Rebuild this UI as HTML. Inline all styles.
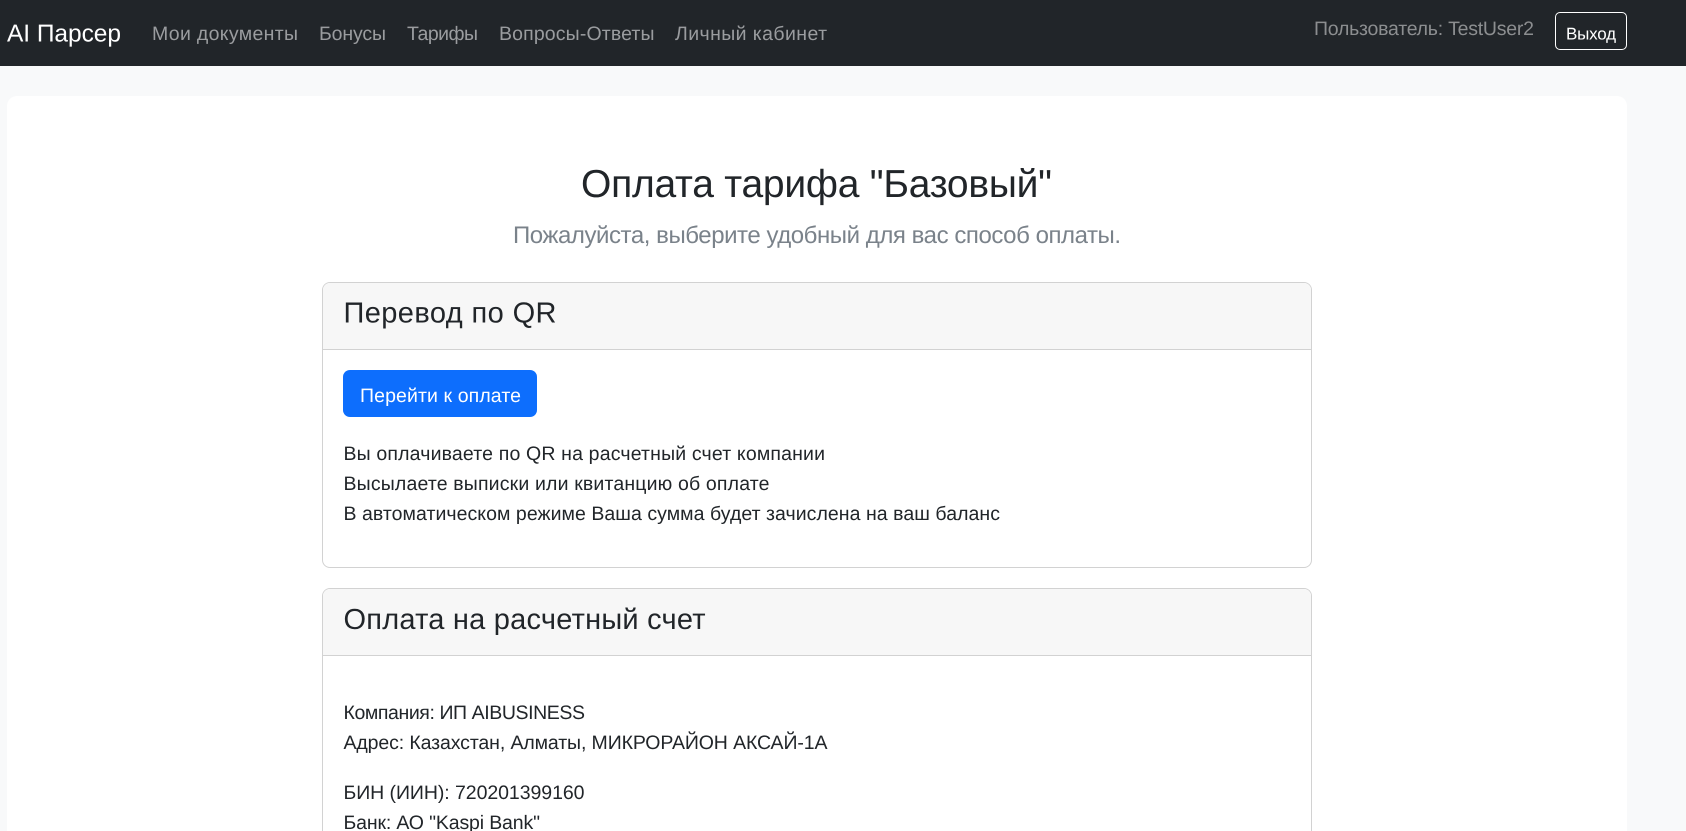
<!DOCTYPE html>
<html lang="ru">
<head>
<meta charset="utf-8">
<title>AI Парсер</title>
<style>
html,body{margin:0;padding:0;background:#f8f9fa;font-family:"Liberation Sans",sans-serif}
.page{position:relative;width:1686px;height:831px;overflow:hidden;background:#f8f9fa}
.nav{position:absolute;left:0;top:0;width:1686px;height:66px;background:#212529}
.panel{position:absolute;left:7px;top:96px;width:1620px;height:735px;background:#fff;border-radius:10px 10px 0 0}
.card{position:absolute;left:322px;width:988px;background:#fff;border:1px solid #d2d2d2;border-radius:8px;overflow:hidden}
.open{height:260px;border-bottom:0;border-radius:8px 8px 0 0}
.head{height:66px;background:#f7f7f7;border-bottom:1px solid #d2d2d2}
.btn{position:absolute;left:343px;top:370px;width:194px;height:47px;background:#0d6efd;border-radius:7px}
.out{position:absolute;left:1555px;top:12px;width:70px;height:36px;border:1px solid #fff;border-radius:5px}
svg{position:absolute;left:0;top:0}
text{font-family:"Liberation Sans",sans-serif;text-rendering:geometricPrecision}
.l{fill:#9a9c9f;font-size:19.5px}
.b{fill:#212529;font-size:19.5px}
.h{fill:#212529;font-size:29px}
</style>
</head>
<body>
<div class="page">
<div class="nav"></div>
<div class="out"></div>
<div class="panel"></div>
<div class="card" style="top:282px;height:284px"><div class="head"></div></div>
<div class="card open" style="top:588px"><div class="head"></div></div>
<div class="btn"></div>
<svg width="1686" height="831" viewBox="0 0 1686 831" xmlns="http://www.w3.org/2000/svg">
<text x="7" y="41.5" fill="#fff" font-size="24.5" textLength="114">AI Парсер</text>
<text class="l" x="152" y="40" textLength="146">Мои документы</text>
<text class="l" x="319" y="40" textLength="67">Бонусы</text>
<text class="l" x="407" y="40" textLength="71">Тарифы</text>
<text class="l" x="499" y="40" textLength="155.5">Вопросы-Ответы</text>
<text class="l" x="675" y="40" textLength="152">Личный кабинет</text>
<text x="1314" y="35" fill="#8c8e90" font-size="19.5" textLength="220">Пользователь: TestUser2</text>
<text x="1566" y="39.5" fill="#fff" font-size="17" textLength="50">Выход</text>
<text x="581" y="197" fill="#212529" font-size="39" textLength="471">Оплата тарифа "Базовый"</text>
<text x="513" y="243" fill="#7a828a" font-size="24" textLength="608">Пожалуйста, выберите удобный для вас способ оплаты.</text>
<text class="h" x="343.5" y="322.5" textLength="213">Перевод по QR</text>
<text x="360" y="402" fill="#fff" font-size="19.5" textLength="161">Перейти к оплате</text>
<text class="b" x="343.5" y="460" textLength="481.5">Вы оплачиваете по QR на расчетный счет компании</text>
<text class="b" x="343.5" y="490" textLength="426">Высылаете выписки или квитанцию об оплате</text>
<text class="b" x="343.5" y="520" textLength="656.5">В автоматическом режиме Ваша сумма будет зачислена на ваш баланс</text>
<text class="h" x="343.5" y="629" textLength="362">Оплата на расчетный счет</text>
<text class="b" x="343.5" y="719" textLength="241.5">Компания: ИП AIBUSINESS</text>
<text class="b" x="343.5" y="749" textLength="484">Адрес: Казахстан, Алматы, МИКРОРАЙОН АКСАЙ-1А</text>
<text class="b" x="343.5" y="799" textLength="241">БИН (ИИН): 720201399160</text>
<text class="b" x="343.5" y="829" textLength="196.5">Банк: АО "Kaspi Bank"</text>
</svg>
</div>
</body>
</html>
